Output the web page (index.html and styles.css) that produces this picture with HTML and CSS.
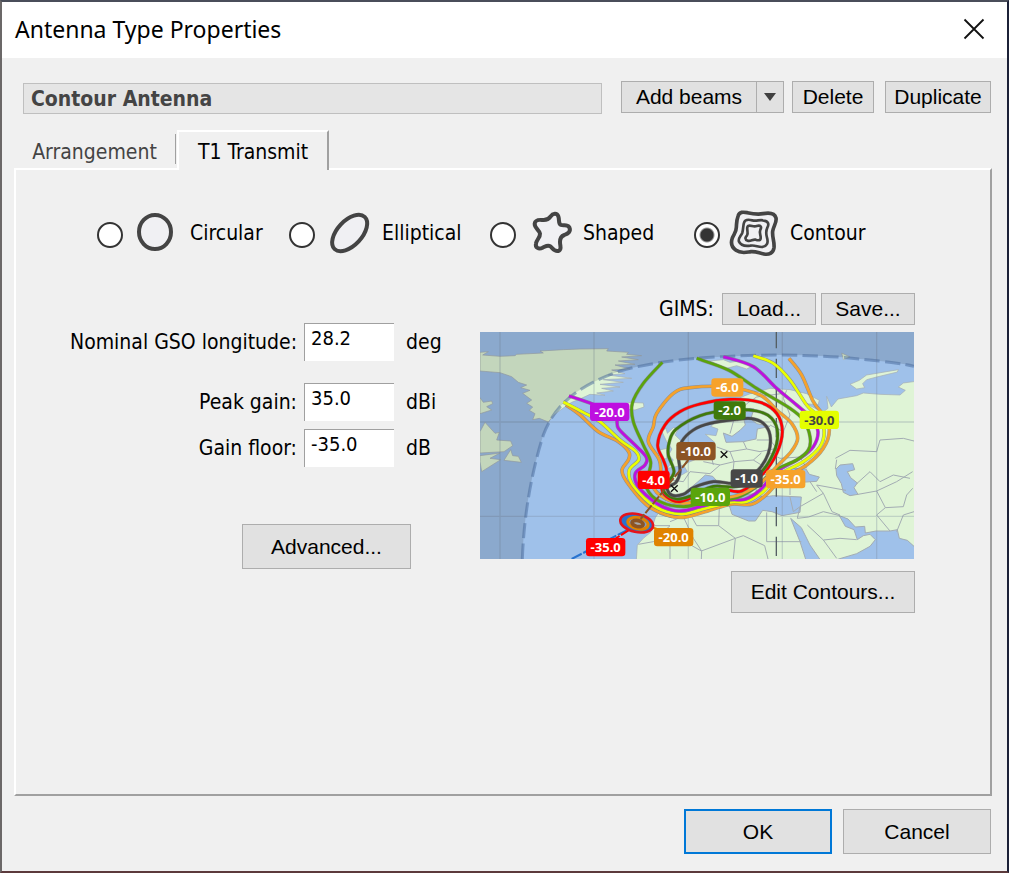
FILE: index.html
```html
<!DOCTYPE html>
<html lang="en">
<head>
<meta charset="utf-8">
<title>Antenna Type Properties</title>
<link rel="stylesheet" href="styles.css">
</head>
<body>
<div class="dialog">
  <header class="titlebar">
    <h1 class="title">Antenna Type Properties</h1>
    <button class="close" type="button" aria-label="Close">
      <svg width="22" height="22" viewBox="0 0 22 22"><path d="M1.5 1.5L20.5 20.5M20.5 1.5L1.5 20.5" stroke="#111" stroke-width="1.8" fill="none"/></svg>
    </button>
  </header>

  <main class="content">
    <div class="toolbar">
      <input class="name" type="text" value="Contour Antenna" aria-label="Antenna name" readonly>
      <div class="split">
        <button class="btn add" type="button">Add beams</button>
        <button class="btn drop" type="button" aria-label="More beam options">
          <svg width="12" height="8" viewBox="0 0 12 8"><path d="M0 0H12L6 8Z" fill="#404040"/></svg>
        </button>
      </div>
      <button class="btn delete" type="button">Delete</button>
      <button class="btn duplicate" type="button">Duplicate</button>
    </div>

    <div class="tabs" role="tablist">
      <button class="tab" type="button" role="tab" aria-selected="false">Arrangement</button>
      <button class="tab active" type="button" role="tab" aria-selected="true">T1 Transmit</button>
    </div>

    <section class="panel" role="tabpanel">
      <div class="shapes">
        <label class="shape"><input type="radio" name="shape">
          <svg width="52" height="54" viewBox="153 18 156 162"><ellipse cx="225" cy="96" rx="48" ry="51" class="icon"/></svg>
          <span>Circular</span></label>
        <label class="shape"><input type="radio" name="shape">
          <svg width="52" height="54" viewBox="729 18 156 162"><ellipse cx="809" cy="99" rx="66" ry="37" transform="rotate(-47 809 99)" class="icon"/></svg>
          <span>Elliptical</span></label>
        <label class="shape"><input type="radio" name="shape">
          <svg width="52" height="54" viewBox="132 18 156 162"><path class="icon" d="M212 49C218 40 231 38 235 49C239 61 234 71 243 75C251 78 261 72 268 82C274 95 263 101 253 105C242 109 240 115 240 126C240 139 246 147 237 152C225 158 218 145 211 139C203 133 197 139 188 143C176 149 165 143 168 130C170 119 181 112 180 101C179 91 163 84 164 71C166 56 181 60 191 60C202 60 206 58 212 49Z"/></svg>
          <span>Shaped</span></label>
        <label class="shape"><input type="radio" name="shape" checked>
          <svg width="55" height="54" viewBox="744 18 165 162">
            <path class="icon icon-mid" d="M774 49C778 34 790 36 802 38C820 42 832 44 849 41C865 38 884 39 888 54C891 68 880 78 878 94C876 112 884 124 882 143C880 158 868 165 852 162C836 159 829 154 813 155C798 157 783 162 768 151C752 140 752 128 757 114C762 102 769 97 769 82C770 70 769 62 774 49Z"/>
            <path class="icon icon-thin" d="M792 68C795 57 805 58 817 61C830 64 837 59 849 61C865 63 868 72 862 83C857 94 858 103 861 113C866 129 860 139 847 141C834 142 825 134 811 137C797 139 783 138 777 125C773 115 783 108 787 98C790 87 789 78 792 68Z"/>
            <path class="icon icon-thin" d="M804 78C812 74 820 82 830 78C842 75 846 80 841 89C837 98 842 105 842 112C843 122 835 122 827 119C818 117 812 125 803 122C794 119 795 113 801 106C807 98 797 84 804 78Z"/>
          </svg>
          <span>Contour</span></label>
      </div>

      <div class="columns">
        <div class="left">
          <div class="fields">
            <label for="lon">Nominal GSO longitude:</label><input id="lon" type="text" value="28.2"><span>deg</span>
            <label class="spaced" for="peak">Peak gain:</label><input class="spaced" id="peak" type="text" value="35.0"><span class="spaced">dBi</span>
            <label for="floor">Gain floor:</label><input id="floor" type="text" value="-35.0"><span>dB</span>
          </div>
          <button class="btn advanced" type="button">Advanced...</button>
        </div>

        <div class="right">
          <div class="gims">
            <span>GIMS:</span>
            <button class="btn file" type="button">Load...</button>
            <button class="btn file" type="button">Save...</button>
          </div>
          <svg class="map" viewBox="0 21 1302 681" role="img" aria-label="Contour map">
            <rect y="21" width="1302" height="681" fill="#9fc1ea"/>
            <g class="land">
              <path d="M0 82L25 80 8 90 60 94 105 92 110 88 190 84 180 78 250 74 300 72 385 71 380 78 445 82 440 88 485 92 425 96 475 104 415 108 465 118 405 120 450 132 395 135 435 146 385 150 455 160 370 164 430 172 360 178 420 186 365 190 400 198 350 204 375 211 330 208 300 222 275 232 240 256 222 270 205 291 178 280 158 284 165 266 148 256 158 246 140 235 155 225 128 205 150 196 122 188 140 180 115 172 95 155 60 143 0 138Z"/>
              <path d="M0 320L15 292 45 325 58 322 50 345 92 348 98 362 72 380 0 384ZM72 406L92 374 98 392 115 394 124 412ZM0 218L10 232 35 228 38 236 20 245 35 255 0 266ZM0 392L60 384 30 400 62 404 5 440 0 410Z"/>
              <path d="M425 240L450 232 490 234 492 246 465 255 420 251Z"/>
              <path d="M545 318L558 310 562 325 580 308 596 312 585 330 606 350 602 380 622 395 614 420 562 430 580 405 566 390 576 372 560 350ZM538 375L562 370 560 400 534 408Z"/>
            </g>
            <g transform="translate(630 0)">
              <g class="land">
                <path d="M-162 720L-158 660 -140 640 -118 622 -104 578 -96 566 -76 560 -70 515 -76 500 -64 480 -68 450 -25 450 -8 440 -20 420 -4 412 20 402 42 385 64 368 74 352 46 328 78 332 84 312 62 304 92 280 118 250 150 218 186 204 212 198 240 190 300 194 350 206 388 226 384 240 350 236 398 262 414 250 410 214 424 246 444 222 500 212 520 204 570 208 630 210 646 196 625 186 640 174 700 166 V720Z"/>
                <path d="M480 178L508 166 530 150 625 134 622 141 560 156 530 164 518 176 524 188 500 192ZM58 108L100 104 120 112 150 108 190 122 170 132 140 122 110 130ZM455 84L480 96 460 104Z"/>
              </g>
              <g fill="#9fc1ea" stroke="#a3acb3" stroke-width="3">
                <path d="M108 352L100 324 126 334 150 316 166 300 158 270 180 250 192 252 182 282 200 296 240 304 202 312 198 342 160 350Z"/>
                <path d="M-92 568L-68 515 -20 512 0 490 24 470 46 450 68 454 100 490 126 498 150 510 196 506 220 516 250 512 334 516 330 562 276 572 246 560 218 556 196 588 176 588 126 568 118 542 60 546 0 558 -56 578Z"/>
                <path d="M270 442L300 430 348 432 358 448 388 456 380 469 300 474 262 462Z"/>
                <path d="M438 432L450 420 488 416 494 434 472 440 482 458 502 474 492 488 504 508 480 512 460 502 454 476 440 452Z"/>
                <path d="M302 580L334 608 360 660 396 712H350L330 650Z"/>
                <path d="M448 572L474 582 496 606 524 604 526 624 558 618 600 618 622 614 628 640 652 646 672 664 700 664V720H400L446 702 500 686 540 664 556 644 540 628 520 632 502 644 492 614 466 604Z"/>
              </g>
              <path class="borders" d="M88 545L86 602 136 640 34 678 -54 628M-20 575L10 640 35 678 34 702M136 640L130 702M136 640L160 632 224 662 234 702M230 562V650H334M-105 602H-60L-110 650-155 658M-60 628V702M-60 590L0 566M0 566L20 602 86 602M300 516L310 560 330 545 400 505 380 480 468 496M330 545L322 580 356 576 400 560 450 572M400 505L426 560 450 570M504 508L560 498 620 470 668 440M560 498L586 548 560 570 600 618M586 548L640 545 650 510 668 490M436 400L480 376 560 380 570 345 640 340 672 348M500 476L540 440 570 470 610 450 660 460M352 600L400 645 450 640 500 644M400 645L440 700M160 350L170 372 210 380 260 370 240 345 200 345M170 372L120 380 80 366M120 380L132 410 90 420 40 410M132 410L190 405 214 384M190 405L230 430 275 440M90 420L60 446 0 440M132 410L128 450 190 445 200 505M190 445L240 450M232 380L270 400 330 396 350 430M260 370L280 320 240 300M280 320L300 270 280 220 290 196M120 326L130 290 170 236 200 216 280 205M0 440L-20 470-60 465M62 385L70 420M440 404L436 432M620 620L640 570 672 560M300 474V510M360 470L380 500"/>
            </g>
            <path class="grid" d="M60 21V702M342 21V702M625 21V702M907 21V702M1190 21V702M0 291H1302M0 574H1302"/>
            <path fill="#000" fill-opacity=".12" d="M127 702C132 560 158 430 190 330C225 235 300 180 420 138C520 110 640 98 730 95C900 85 1050 92 1150 103C1220 110 1270 116 1302 124V21H0V702Z"/>
            <path fill="none" stroke="#46689a" stroke-opacity=".5" stroke-width="9" stroke-dasharray="46 16" d="M127 702C132 560 158 430 190 330C225 235 300 180 420 138C520 110 640 98 730 95C900 85 1050 92 1150 103C1220 110 1270 116 1302 124"/>
            <path stroke="#555f64" stroke-width="4" stroke-dasharray="58 31" stroke-dashoffset="9" d="M889 21V702"/>
            <g id="contours"></g>
            <path d="M275 702L440 616" stroke="#2873cf" stroke-width="6" stroke-dasharray="34 5"/>
            <path d="M395 648L455 610" stroke="#f00" stroke-width="6" stroke-dasharray="28 5"/>
            <path d="M500 600L545 618" stroke="#e08300" stroke-width="7"/>
            <g fill="none" transform="rotate(12 470 594)">
              <ellipse cx="470" cy="594" rx="50" ry="27" fill="#2873cf" stroke="#e5141b" stroke-width="8"/>
              <ellipse cx="474" cy="594" rx="31" ry="17" fill="#7d9cc4" stroke="#e08300" stroke-width="9"/>
              <ellipse cx="473" cy="595" rx="17" ry="9" fill="#aaa" stroke="#8c5424" stroke-width="11"/>
            </g>
            <path d="M625 405L482 582" stroke="#8c5424" stroke-width="6" stroke-dasharray="30 5"/>
            <path d="M573 481L593 500M593 481L573 500M722 379L742 398M742 379L722 398" stroke="#111" stroke-width="4"/>
            <g id="tags" class="tags"></g>
          </svg>
          <button class="btn edit" type="button">Edit Contours...</button>
        </div>
      </div>
    </section>

    <footer class="actions">
      <button class="btn primary" type="button">OK</button>
      <button class="btn" type="button">Cancel</button>
    </footer>
  </main>
</div>
<script src="map.js"></script>
</body>
</html>
```
FILE: styles.css
```css
* { box-sizing: border-box; }

body {
  margin: 0;
  font-family: "DejaVu Sans Condensed", "Noto Sans", "Open Sans", sans-serif;
  font-size: 21px;
  line-height: 28px;
  color: #000;
}

button, input { font: inherit; color: inherit; margin: 0; }

.dialog {
  display: flex;
  flex-direction: column;
  min-height: 100vh;
  border: 2px solid #6b6868;
  border-top-color: #4a4e5a;
  border-right-color: #1c2138;
  border-bottom-color: #5c3a3c;
  background: #f0f0f0;
}

.titlebar {
  display: flex;
  align-items: center;
  justify-content: space-between;
  height: 56px;
  padding: 0 22px 2px 13px;
  background: #fff;
}

.title {
  margin: 0;
  font-family: "Noto Sans", "Open Sans", sans-serif;
  font-size: 23px;
  font-weight: 400;
}

.close {
  display: flex;
  padding: 0;
  border: 0;
  background: none;
}

.content {
  display: flex;
  flex: 1;
  flex-direction: column;
  padding: 23px 15px 17px 12px;
}

.btn {
  height: 32px;
  padding: 0;
  border: 1px solid #adadad;
  background: #e1e1e1;
  font-family: "Liberation Sans", Arial, sans-serif;
  font-size: 21px;
  line-height: 28px;
}

.toolbar {
  display: flex;
  align-items: flex-start;
  padding: 0 1px 0 9px;
}

.name {
  flex: 1;
  min-width: 0;
  height: 31px;
  margin: 2px 19px 0 0;
  padding: 0 7px;
  border: 1px solid #bfbfbf;
  background: #e5e5e5;
  color: #444;
  font-weight: 700;
}

.split { display: flex; margin-right: 8px; }
.add { width: 135px; border-right: 0; }
.drop { display: flex; align-items: center; justify-content: center; width: 28px; }
.delete { width: 82px; margin-right: 11px; }
.duplicate { width: 106px; }

.tabs {
  display: flex;
  align-items: stretch;
  height: 38px;
  margin-top: 16px;
}

.tab {
  width: 162px;
  height: 30px;
  margin-top: 4px;
  padding: 4px 0 0;
  border: 0;
  border-right: 1px solid #a0a0a0;
  background: none;
  color: #444;
}

.tab.active {
  position: relative;
  width: 152px;
  height: 40px;
  margin: 0 0 -2px 1px;
  padding: 1px 0 0;
  border-top: 2px solid #fff;
  border-left: 2px solid #fff;
  border-right: 2px solid #a0a0a0;
  background: #f0f0f0;
  color: #000;
}

.panel {
  flex: 1;
  padding: 36px 75px 36px 54px;
  border: 2px solid #a0a0a0;
  border-top-color: #fff;
  border-left-color: #fff;
}

.shapes {
  display: grid;
  grid-template-columns: 192px 201px 204px auto;
  padding-left: 27px;
}

.shape { display: flex; align-items: center; }
.shape svg { margin: 0 7px 0 8px; }
.shape input {
  appearance: none;
  width: 26px;
  height: 26px;
  margin-top: 4px;
  border: 2px solid #333;
  border-radius: 50%;
  background: #fff;
}
.shape input:checked { background: radial-gradient(circle, #333 6px, #fff 8px); }

.icon { fill: #f0f0f3; stroke: #444; stroke-width: 12; }
.icon-mid { stroke-width: 11; }
.icon-thin { stroke-width: 8; }

.columns {
  display: flex;
  justify-content: space-between;
  margin-top: 33px;
}

.left { padding-top: 30px; }

.fields {
  display: grid;
  grid-template-columns: 227px 90px auto;
  column-gap: 7px;
  row-gap: 8px;
  align-items: center;
}
.fields label { text-align: right; white-space: nowrap; }
.fields span { padding-left: 5px; }
.fields .spaced { margin-top: 14px; }
.fields input {
  height: 38px;
  padding: 0 6px 10px;
  border: 0;
  border-top: 1px solid #a0a0a0;
  border-left: 1px solid #a0a0a0;
  background: #fff;
  font-size: 20px;
}

.advanced { width: 169px; height: 45px; margin: 57px 0 0 172px; }

.right {
  display: flex;
  flex-direction: column;
  align-items: flex-end;
}

.gims { display: flex; align-items: center; gap: 5px; }
.gims span { margin-right: 3px; }
.file { width: 94px; }
.map { display: block; width: 434px; margin: 7px 1px 12px 0; }
.edit { width: 184px; height: 42px; }

.land path { fill: #dff4d6; stroke: #a3acb3; stroke-width: 2; }
.borders { fill: none; stroke: #a3acb3; stroke-width: 3; stroke-linejoin: round; }
.grid { fill: none; stroke: #78879a; stroke-opacity: .3; stroke-width: 4; }
.tags text {
  font-family: "Noto Sans", "Open Sans", sans-serif;
  font-size: 39px;
  font-weight: 700;
  text-anchor: middle;
}

.actions {
  display: flex;
  justify-content: flex-end;
  gap: 11px;
  margin: 13px 1px 0 0;
}
.actions .btn { width: 148px; height: 45px; }
.actions .primary { border: 2px solid #0078d7; }
```
FILE: map.js
```js
const NS = "http://www.w3.org/2000/svg";

function add(parent, tag, attrs, text) {
  const el = document.createElementNS(NS, tag);
  for (const key in attrs) el.setAttribute(key, attrs[key]);
  if (text) el.textContent = text;
  parent.appendChild(el);
}

// Catmull-Rom spline through the points, written as cubic segments.
function smooth(p, closed) {
  const n = p.length;
  const at = i => closed ? p[(i + n) % n] : p[Math.max(0, Math.min(n - 1, i))];
  let d = `M${p[0]}`;
  for (let i = 0; i < (closed ? n : n - 1); i++) {
    const [a, b, c, e] = [at(i - 1), at(i), at(i + 1), at(i + 2)];
    d += `C${b[0] + (c[0] - a[0]) / 6} ${b[1] + (c[1] - a[1]) / 6} ${c[0] - (e[0] - b[0]) / 6} ${c[1] - (e[1] - b[1]) / 6} ${c}`;
  }
  return d;
}

const contours = [
  ["#f6a22b", false, [[258,240],[300,270],[355,320],[415,350],[447,382],[445,405],[426,435],[440,470],[500,540],[560,570],[610,577],[670,562],[750,538],[815,538],[860,508],[905,462],[980,420],[1030,370],[1048,315],[1030,270],[1000,230],[965,150],[927,100]]],
  ["#eaff00", false, [[250,231],[310,262],[360,290],[420,345],[468,380],[476,405],[448,435],[455,475],[510,535],[560,560],[612,567],[670,552],[750,532],[800,530],[850,500],[895,450],[970,410],[1020,365],[1032,315],[1010,270],[980,240],[930,165],[880,115],[820,92]]],
  ["#be0fe0", false, [[267,213],[340,238],[405,270],[415,310],[460,355],[498,395],[495,420],[466,445],[475,485],[530,535],[575,555],[612,557],[670,542],[750,525],[795,523],[840,495],[890,440],[960,400],[1000,365],[1014,320],[995,280],[950,240],[890,190],[820,125],[730,95]]],
  ["#5aa40c", false, [[547,112],[490,175],[457,235],[460,290],[490,360],[512,410],[505,450],[500,490],[540,530],[610,545],[680,530],[770,518],[830,485],[880,438],[950,405],[985,375],[990,335],[970,285],[930,250],[830,190],[745,135],[650,100]]],
  ["#f6a22b", true, [[740,186],[630,188],[580,205],[530,265],[520,305],[505,350],[538,405],[540,450],[520,485],[555,520],[610,535],[680,522],[770,512],[840,475],[890,425],[935,378],[953,340],[935,295],[890,255],[840,210]]],
  ["#f00", true, [[750,223],[660,237],[600,260],[555,300],[533,360],[550,405],[560,440],[545,485],[560,515],[600,530],[660,508],[720,492],[785,498],[850,445],[890,385],[907,320],[890,265],[840,232]]],
  ["#3f7a0b", true, [[750,255],[660,272],[588,313],[568,350],[565,390],[582,440],[562,475],[552,500],[590,522],[640,510],[700,484],[775,484],[840,445],[880,385],[893,325],[875,280],[830,258]]],
  ["#484848", true, [[770,283],[690,295],[640,315],[605,350],[595,390],[600,440],[588,472],[562,488],[575,510],[610,508],[640,488],[700,470],[770,474],[830,440],[865,385],[870,330],[850,295],[815,281]]]
];

const contourLayer = document.getElementById("contours");
for (const [color, closed, points] of contours) {
  const d = smooth(points, closed);
  add(contourLayer, "path", { d, fill: "none", stroke: "#77777a", "stroke-opacity": .7, "stroke-width": 11 });
  add(contourLayer, "path", { d, fill: "none", stroke: color, "stroke-width": 8 });
}

const tags = [
  [330, 233, 118, "-20.0", "#be0fe0"],
  [694, 160, 96, "-6.0", "#f6a22b"],
  [701, 229, 96, "-2.0", "#3f7a0b"],
  [959, 257, 118, "-30.0", "#e4ff00"],
  [589, 351, 118, "-10.0", "#8c5424"],
  [473, 437, 96, "-4.0", "#f00"],
  [752, 433, 96, "-1.0", "#484848"],
  [858, 435, 118, "-35.0", "#f6a22b"],
  [632, 488, 118, "-10.0", "#5aa40c"],
  [522, 609, 118, "-20.0", "#e08300"],
  [318, 639, 118, "-35.0", "#f00"]
];

const tagLayer = document.getElementById("tags");
for (const [x, y, width, text, fill] of tags) {
  add(tagLayer, "rect", { x, y, width, height: 55, rx: 10, fill });
  add(tagLayer, "text", { x: x + width / 2, y: y + 42, fill: text === "-30.0" ? "#444" : "#fff" }, text);
}
```
